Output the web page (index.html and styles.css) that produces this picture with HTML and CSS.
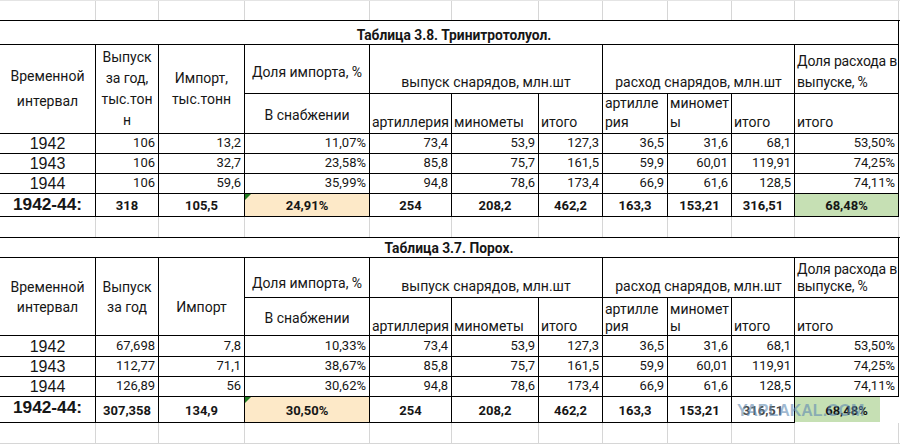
FILE: index.html
```html
<!DOCTYPE html>
<html lang="ru">
<head>
<meta charset="utf-8">
<title>Таблицы 3.8 и 3.7</title>
<link rel="stylesheet" href="styles.css">
</head>
<body>
<div class="sheet">
  <div class="gridrow g-top"><span></span><span></span><span></span><span></span><span></span><span></span><span></span><span></span><span></span><span></span><span></span></div>

  <div class="tbl t1">
    <div class="title">Таблица 3.8. Тринитротолуол.</div>
    <div class="hd r2 ctr mid lh25">Временной<br>интервал</div>
    <div class="hd r2 ctr mid">Выпуск<br>за год,<br>тыс.тон<br>н</div>
    <div class="hd r2 ctr mid">Импорт,<br>тыс.тонн</div>
    <div class="hd ctr mid dol1">Доля импорта, %</div>
    <div class="hd c3 ctr">выпуск снарядов, млн.шт</div>
    <div class="hd c3 ctr">расход снарядов, млн.шт</div>
    <div class="hd lft tight dr">Доля расхода в<br>выпуске, %</div>
    <div class="hd ctr mid sn">В снабжении</div>
    <div class="hd lft sub">артиллерия</div>
    <div class="hd lft sub">минометы</div>
    <div class="hd lft sub">итого</div>
    <div class="hd lft sub">артилле<br>рия</div>
    <div class="hd lft sub">миномет<br>ы</div>
    <div class="hd lft sub">итого</div>
    <div class="hd lft sub">итого</div>

    <div class="yr">1942</div><div class="num">106</div><div class="num">13,2</div><div class="num">11,07%</div><div class="num">73,4</div><div class="num">53,9</div><div class="num">127,3</div><div class="num">36,5</div><div class="num">31,6</div><div class="num">68,1</div><div class="num">53,50%</div>
    <div class="yr">1943</div><div class="num">106</div><div class="num">32,7</div><div class="num">23,58%</div><div class="num">85,8</div><div class="num">75,7</div><div class="num">161,5</div><div class="num">59,9</div><div class="num">60,01</div><div class="num">119,91</div><div class="num">74,25%</div>
    <div class="yr">1944</div><div class="num">106</div><div class="num">59,6</div><div class="num">35,99%</div><div class="num">94,8</div><div class="num">78,6</div><div class="num">173,4</div><div class="num">66,9</div><div class="num">61,6</div><div class="num">128,5</div><div class="num">74,11%</div>
    <div class="totlbl">1942-44:</div><div class="tot">318</div><div class="tot">105,5</div><div class="tot yel">24,91%</div><div class="tot">254</div><div class="tot">208,2</div><div class="tot">462,2</div><div class="tot">163,3</div><div class="tot">153,21</div><div class="tot">316,51</div><div class="tot grn">68,48%</div>
  </div>

  <div class="gridrow g-mid"><span></span><span></span><span></span><span></span><span></span><span></span><span></span><span></span><span></span><span></span><span></span></div>

  <div class="tbl t2">
    <div class="title">Таблица 3.7. Порох.</div>
    <div class="hd r2 ctr mid lh20">Временной<br>интервал</div>
    <div class="hd r2 ctr mid lh20">Выпуск<br>за год</div>
    <div class="hd r2 ctr mid imp2">Импорт</div>
    <div class="hd ctr mid dol2">Доля импорта, %</div>
    <div class="hd c3 ctr">выпуск снарядов, млн.шт</div>
    <div class="hd c3 ctr">расход снарядов, млн.шт</div>
    <div class="hd lft tight dr">Доля расхода в<br>выпуске, %</div>
    <div class="hd ctr mid sn">В снабжении</div>
    <div class="hd lft sub">артиллерия</div>
    <div class="hd lft sub">минометы</div>
    <div class="hd lft sub">итого</div>
    <div class="hd lft sub">артилле<br>рия</div>
    <div class="hd lft sub">миномет<br>ы</div>
    <div class="hd lft sub">итого</div>
    <div class="hd lft sub">итого</div>

    <div class="yr">1942</div><div class="num">67,698</div><div class="num">7,8</div><div class="num">10,33%</div><div class="num">73,4</div><div class="num">53,9</div><div class="num">127,3</div><div class="num">36,5</div><div class="num">31,6</div><div class="num">68,1</div><div class="num">53,50%</div>
    <div class="yr">1943</div><div class="num">112,77</div><div class="num">71,1</div><div class="num">38,67%</div><div class="num">85,8</div><div class="num">75,7</div><div class="num">161,5</div><div class="num">59,9</div><div class="num">60,01</div><div class="num">119,91</div><div class="num">74,25%</div>
    <div class="yr">1944</div><div class="num">126,89</div><div class="num">56</div><div class="num">30,62%</div><div class="num">94,8</div><div class="num">78,6</div><div class="num">173,4</div><div class="num">66,9</div><div class="num">61,6</div><div class="num">128,5</div><div class="num">74,11%</div>
    <div class="totlbl">1942-44:</div><div class="tot">307,358</div><div class="tot">134,9</div><div class="tot yel">30,50%</div><div class="tot">254</div><div class="tot">208,2</div><div class="tot">462,2</div><div class="tot">163,3</div><div class="tot">153,21</div><div class="tot faded">316,51</div><div class="tot grn grn2">68,48%</div>
  </div>

  <div class="gridrow g-bot"><span></span><span></span><span></span><span></span><span></span><span></span><span></span><span></span><span></span><span></span><span></span></div>

  <span class="wm">YAPLAKAL.COM</span>
</div>
</body>
</html>
```
FILE: styles.css
```css
:root {
  --cols: 96px 63px 86px 125px 82px 87px 64px 65px 64px 63px 104px;
}
* { box-sizing: border-box; }
body { margin: 0; background: #fff; }

.sheet {
  position: relative;
  width: 900px;
  height: 444px;
  overflow: hidden;
  font-family: Roboto, "Liberation Sans", sans-serif;
  color: #161616;
}

.gridrow {
  display: grid;
  grid-template-columns: var(--cols);
}
.gridrow > span { border-right: 1px solid #d6d6d6; }
.g-top { height: 20px; border-top: 1px solid #e4e4e4; }
.g-mid { height: 20px; }
.g-bot { height: 21px; border-bottom: 1px solid #d6d6d6; }

.tbl {
  display: grid;
  grid-template-columns: var(--cols);
  border-top: 1px solid #000;
}
.t1 { grid-template-rows: 24px 49px 40px 20px 20px 20px 23px; }
.t2 { grid-template-rows: 20px 40px 38px 21px 20px 20px 26px; }

.tbl > div {
  border-right: 1px solid #000;
  border-bottom: 1px solid #000;
  display: flex;
  align-items: flex-end;
  white-space: nowrap;
  overflow: hidden;
}

.title {
  grid-column: 1 / -1;
  justify-content: center;
  font-weight: 700;
  font-size: 13.8px;
  line-height: 18px;
}
.t1 .title { padding-left: 10px; }

.hd { font-size: 14px; line-height: 21px; }
.r2 { grid-row: span 2; }
.c3 { grid-column: span 3; }
.ctr { justify-content: center; text-align: center; }
.lft { justify-content: flex-start; text-align: left; padding-left: 2px; }
.tight { letter-spacing: -0.15px; }
.tbl > .mid { align-items: center; }
.lh25 { line-height: 25px; }
.lh20 { line-height: 20px; }
.imp2 { padding-top: 22px; }
.dol1 { padding-top: 6px; }
.dol2 { padding-top: 11px; }
.sn { padding-top: 4px; }
.t1 .sub { line-height: 19px; padding-bottom: 1px; }
.t2 .sub { line-height: 17px; }
.t2 .dr { line-height: 17px; padding-bottom: 2px; }

.num {
  font-size: 13px;
  line-height: 16px;
  justify-content: flex-end;
  padding-right: 3px;
  padding-bottom: 2px;
}
.yr {
  font-family: "Liberation Sans", Arial, sans-serif;
  font-size: 16px;
  line-height: 18px;
  justify-content: center;
}
.tot {
  font-weight: 700;
  font-size: 13px;
  line-height: 18px;
  justify-content: center;
  padding-bottom: 1px;
}
.totlbl {
  font-family: "Liberation Sans", Arial, sans-serif;
  font-weight: 700;
  font-size: 17.3px;
  line-height: 20px;
  justify-content: center;
  padding-bottom: 2px;
}
.t2 .totlbl { padding-bottom: 5px; }
.t2 .tot { padding-bottom: 2px; }

.yel { background: #fde9c8; position: relative; }
.yel::before {
  content: "";
  position: absolute;
  left: 0;
  top: 0;
  border-top: 6px solid #1f7a1f;
  border-right: 6px solid transparent;
}
.grn { background: #c6e0b4; }
.tbl > .grn2 {
  background: linear-gradient(to right, #c6e0b4 85px, #fff 85px);
  border-right-color: #fff;
  border-bottom-color: #fff;
}
.faded { color: #4a4a4a; }

.wm {
  position: absolute;
  left: 737px;
  top: 402px;
  font-family: "Liberation Sans", Arial, sans-serif;
  font-weight: 700;
  font-size: 16px;
  line-height: 18px;
  color: rgba(96, 138, 178, 0.6);
}
```
